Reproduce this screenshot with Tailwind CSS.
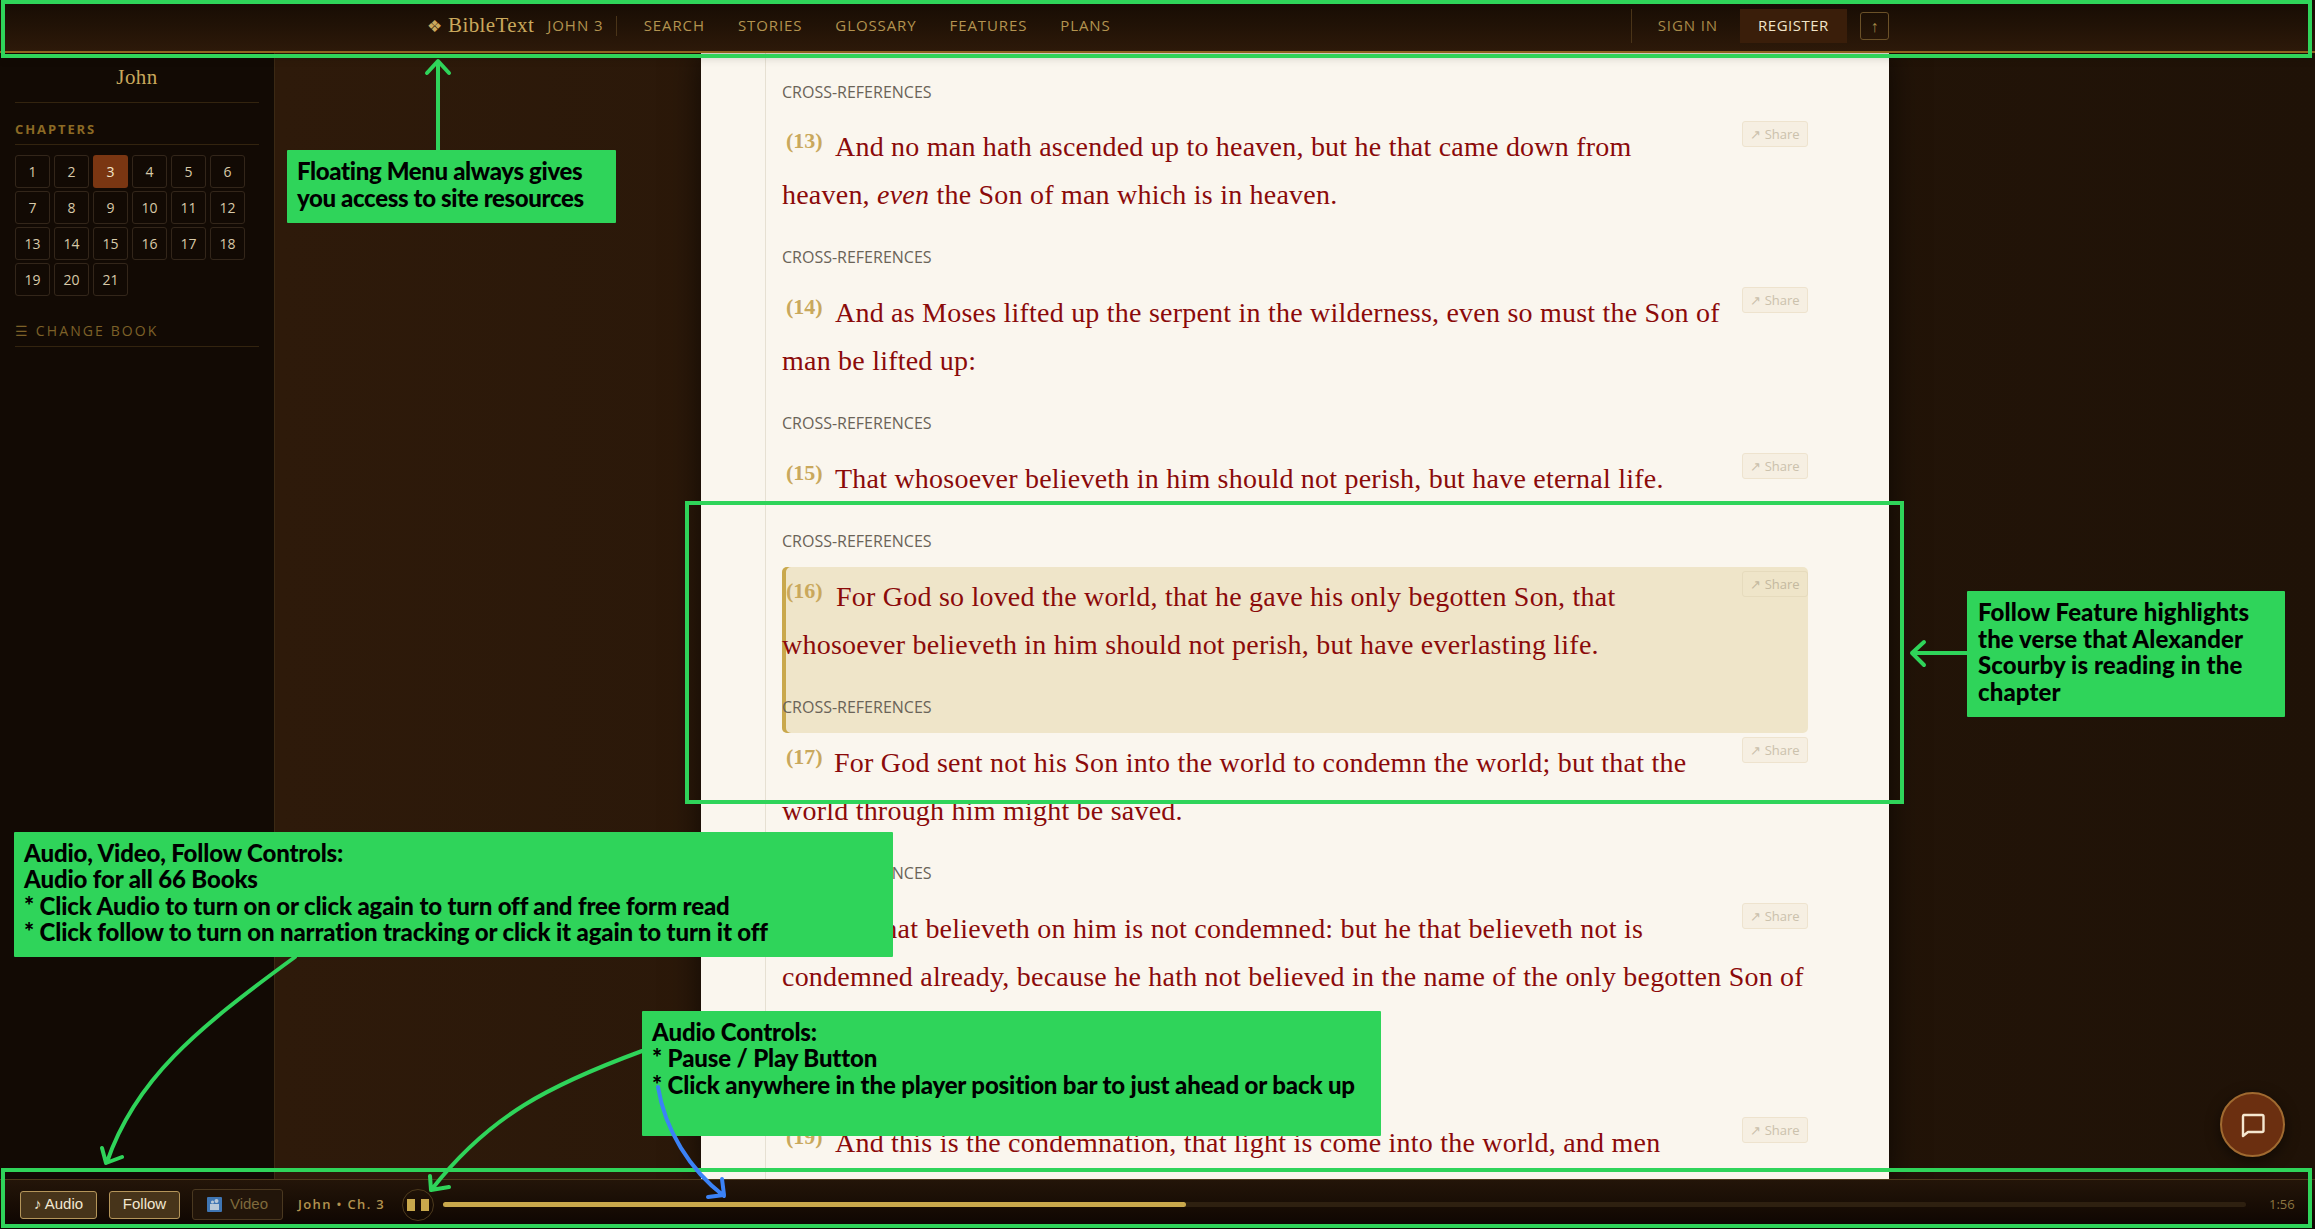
<!DOCTYPE html>
<html lang="en">
<head>
    <meta charset="UTF-8">
    <meta name="viewport" content="width=device-width, initial-scale=1.0">
    <title>BibleText - John 3</title>
    <script src="https://cdn.jsdelivr.net/npm/@tailwindcss/browser@4"></script>
</head>
<body class="bg-[#1f1207]">
<div class="relative w-[2315px] h-[1229px] overflow-hidden flex flex-col font-['Open_Sans',sans-serif]">

    <!-- floating menu -->
    <header class="relative z-20 h-[53px] shrink-0 flex items-center pl-[427px] pr-[426px] bg-linear-to-b from-[#160c04] to-[#2d1909] border-b-2 border-[#8f6420] shadow-[0_3px_10px_rgba(0,0,0,0.25)]">
        <span class="text-[#c9a85c] text-[17px] mr-[6px] leading-none">❖</span>
        <span class="font-['Liberation_Serif',serif] text-[#c9a85c] text-[21px] tracking-[0.4px]">BibleText</span>
        <span class="ml-[13px] text-[#b3934f] text-[15px] tracking-[1px]">JOHN 3</span>
        <span class="ml-[12px] w-px h-[20px] bg-[#4a3418]"></span>
        <nav class="ml-[27px] flex gap-[33px] text-[#b3934f] text-[15px] tracking-[0.9px]">
            <a>SEARCH</a>
            <a>STORIES</a>
            <a>GLOSSARY</a>
            <a>FEATURES</a>
            <a>PLANS</a>
        </nav>
        <div class="ml-auto flex items-center">
            <span class="w-px h-[34px] bg-[#4a3418]"></span>
            <a class="ml-[26px] text-[#a88a48] text-[15px] tracking-[0.9px]">SIGN IN</a>
            <a class="ml-[22px] w-[107px] h-[34px] flex items-center justify-center bg-[#3a1e0a] text-[#f0e4c8] text-[15px] tracking-[0.5px]">REGISTER</a>
            <button class="ml-[13px] w-[29px] h-[28px] flex items-center justify-center border border-[#6b5128] rounded-[3px] text-[#a88a48] text-[16px]">↑</button>
        </div>
    </header>

    <div class="flex flex-1 min-h-0">
        <!-- sidebar -->
        <aside class="w-[275px] shrink-0 px-[15px] bg-[#120a04] border-r border-[#3b2914]">
            <h2 class="h-[50px] flex items-center justify-center border-b border-[#33240f] font-['Liberation_Serif',serif] text-[#c9a85c] text-[21px] tracking-[0.4px]">John</h2>
            <h3 class="mt-[16px] pb-[5px] border-b border-[#33240f] text-[#8c6a24] text-[13px] font-bold tracking-[1.9px] leading-[20px]">CHAPTERS</h3>
            <div class="mt-[10px] grid grid-cols-[repeat(6,35px)] auto-rows-[33px] gap-x-[4px] gap-y-[3px] text-[14px] text-[#d8c9a8]">
                <a class="flex items-center justify-center border border-[#33261a] rounded-[3px]">1</a>
                <a class="flex items-center justify-center border border-[#33261a] rounded-[3px]">2</a>
                <a class="flex items-center justify-center bg-[#7a3612] text-[#f3e6c8] rounded-[3px]">3</a>
                <a class="flex items-center justify-center border border-[#33261a] rounded-[3px]">4</a>
                <a class="flex items-center justify-center border border-[#33261a] rounded-[3px]">5</a>
                <a class="flex items-center justify-center border border-[#33261a] rounded-[3px]">6</a>
                <a class="flex items-center justify-center border border-[#33261a] rounded-[3px]">7</a>
                <a class="flex items-center justify-center border border-[#33261a] rounded-[3px]">8</a>
                <a class="flex items-center justify-center border border-[#33261a] rounded-[3px]">9</a>
                <a class="flex items-center justify-center border border-[#33261a] rounded-[3px]">10</a>
                <a class="flex items-center justify-center border border-[#33261a] rounded-[3px]">11</a>
                <a class="flex items-center justify-center border border-[#33261a] rounded-[3px]">12</a>
                <a class="flex items-center justify-center border border-[#33261a] rounded-[3px]">13</a>
                <a class="flex items-center justify-center border border-[#33261a] rounded-[3px]">14</a>
                <a class="flex items-center justify-center border border-[#33261a] rounded-[3px]">15</a>
                <a class="flex items-center justify-center border border-[#33261a] rounded-[3px]">16</a>
                <a class="flex items-center justify-center border border-[#33261a] rounded-[3px]">17</a>
                <a class="flex items-center justify-center border border-[#33261a] rounded-[3px]">18</a>
                <a class="flex items-center justify-center border border-[#33261a] rounded-[3px]">19</a>
                <a class="flex items-center justify-center border border-[#33261a] rounded-[3px]">20</a>
                <a class="flex items-center justify-center border border-[#33261a] rounded-[3px]">21</a>
            </div>
            <div class="mt-[25px] pb-[5px] border-b border-[#33240f] text-[#7d6128] text-[14px] tracking-[2.1px] leading-[20px]">☰ CHANGE BOOK</div>
        </aside>

        <!-- reading column -->
        <main class="flex-1 min-w-0 pl-[426px] bg-linear-to-r from-[#2e1a0a] to-[#1f1207]">
            <article class="w-[1188px] h-full overflow-hidden pl-[64px] bg-[#faf6ee] shadow-[0_0_30px_rgba(0,0,0,0.65)]">
                <div class="h-full pl-[16px] pr-[81px] pt-[29px] border-l border-[#e6e0d2] font-['Liberation_Serif',serif] text-[#8b0a0a] text-[28px] leading-[48px] tracking-[0.22px]">
                    <div class="font-['Open_Sans',sans-serif] text-[#6a6358] text-[16px] leading-[20px] tracking-normal">CROSS-REFERENCES</div>
                    <div class="mt-[15px]"></div>

                    <section class="relative pt-[6px] pb-[64px] whitespace-nowrap">
                        <button class="absolute top-[4px] right-0 h-[26px] w-[66px] bg-[#f6efe2] border border-[#eee3ce] rounded-[3px] font-['Open_Sans',sans-serif] text-[#cbc1ac] text-[13px] leading-none tracking-normal">↗ Share</button>
                        <span class="inline-block w-[53px] pl-[4px] align-[8px] font-bold text-[#c9a85c] text-[22px] leading-[0] tracking-normal">(13)</span>And no man hath ascended up to heaven, but he that came down from<br>heaven, <em>even</em> the Son of man which is in heaven.
                        <div class="absolute bottom-[16px] left-0 font-['Open_Sans',sans-serif] text-[#6a6358] text-[16px] leading-[20px] tracking-normal">CROSS-REFERENCES</div>
                    </section>

                    <section class="relative pt-[6px] pb-[64px] whitespace-nowrap">
                        <button class="absolute top-[4px] right-0 h-[26px] w-[66px] bg-[#f6efe2] border border-[#eee3ce] rounded-[3px] font-['Open_Sans',sans-serif] text-[#cbc1ac] text-[13px] leading-none tracking-normal">↗ Share</button>
                        <span class="inline-block w-[53px] pl-[4px] align-[8px] font-bold text-[#c9a85c] text-[22px] leading-[0] tracking-normal">(14)</span>And as Moses lifted up the serpent in the wilderness, even so must the Son of<br>man be lifted up:
                        <div class="absolute bottom-[16px] left-0 font-['Open_Sans',sans-serif] text-[#6a6358] text-[16px] leading-[20px] tracking-normal">CROSS-REFERENCES</div>
                    </section>

                    <section class="relative pt-[6px] pb-[64px] whitespace-nowrap">
                        <button class="absolute top-[4px] right-0 h-[26px] w-[66px] bg-[#f6efe2] border border-[#eee3ce] rounded-[3px] font-['Open_Sans',sans-serif] text-[#cbc1ac] text-[13px] leading-none tracking-normal">↗ Share</button>
                        <span class="inline-block w-[53px] pl-[4px] align-[8px] font-bold text-[#c9a85c] text-[22px] leading-[0] tracking-normal">(15)</span>That whosoever believeth in him should not perish, but have eternal life.
                        <div class="absolute bottom-[16px] left-0 font-['Open_Sans',sans-serif] text-[#6a6358] text-[16px] leading-[20px] tracking-normal">CROSS-REFERENCES</div>
                    </section>

                    <section class="relative pt-[6px] pb-[64px] whitespace-nowrap bg-[#efe5c9] rounded-[5px] shadow-[inset_4px_0_0_#c9a84c]">
                        <button class="absolute top-[4px] right-0 h-[26px] w-[66px] bg-[#efe5c9] border border-[#e6dbbd] rounded-[3px] font-['Open_Sans',sans-serif] text-[#c4b99f] text-[13px] leading-none tracking-normal">↗ Share</button>
                        <span class="inline-block w-[54px] pl-[4px] align-[8px] font-bold text-[#c9a85c] text-[22px] leading-[0] tracking-normal">(16)</span>For God so loved the world, that he gave his only begotten Son, that<br>whosoever believeth in him should not perish, but have everlasting life.
                        <div class="absolute bottom-[16px] left-0 font-['Open_Sans',sans-serif] text-[#6a6358] text-[16px] leading-[20px] tracking-normal">CROSS-REFERENCES</div>
                    </section>

                    <section class="relative pt-[6px] pb-[64px] whitespace-nowrap">
                        <button class="absolute top-[4px] right-0 h-[26px] w-[66px] bg-[#f6efe2] border border-[#eee3ce] rounded-[3px] font-['Open_Sans',sans-serif] text-[#cbc1ac] text-[13px] leading-none tracking-normal">↗ Share</button>
                        <span class="inline-block w-[52px] pl-[4px] align-[8px] font-bold text-[#c9a85c] text-[22px] leading-[0] tracking-normal">(17)</span>For God sent not his Son into the world to condemn the world; but that the<br>world through him might be saved.
                        <div class="absolute bottom-[16px] left-0 font-['Open_Sans',sans-serif] text-[#6a6358] text-[16px] leading-[20px] tracking-normal">CROSS-REFERENCES</div>
                    </section>

                    <section class="relative pt-[6px] pb-[64px] whitespace-nowrap">
                        <button class="absolute top-[4px] right-0 h-[26px] w-[66px] bg-[#f6efe2] border border-[#eee3ce] rounded-[3px] font-['Open_Sans',sans-serif] text-[#cbc1ac] text-[13px] leading-none tracking-normal">↗ Share</button>
                        <span class="inline-block w-[53px] pl-[4px] align-[8px] font-bold text-[#c9a85c] text-[22px] leading-[0] tracking-normal">(18)</span>He that believeth on him is not condemned: but he that believeth not is<br>condemned already, because he hath not believed in the name of the only begotten Son of<br>God.
                        <div class="absolute bottom-[16px] left-0 font-['Open_Sans',sans-serif] text-[#6a6358] text-[16px] leading-[20px] tracking-normal">CROSS-REFERENCES</div>
                    </section>

                    <section class="relative pt-[6px] pb-[64px] whitespace-nowrap">
                        <button class="absolute top-[4px] right-0 h-[26px] w-[66px] bg-[#f6efe2] border border-[#eee3ce] rounded-[3px] font-['Open_Sans',sans-serif] text-[#cbc1ac] text-[13px] leading-none tracking-normal">↗ Share</button>
                        <span class="inline-block w-[53px] pl-[4px] align-[8px] font-bold text-[#c9a85c] text-[22px] leading-[0] tracking-normal">(19)</span>And this is the condemnation, that light is come into the world, and men<br>loved darkness rather than light, because their deeds were evil.
                    </section>
                </div>
            </article>
        </main>
    </div>

    <!-- audio bar -->
    <footer class="relative z-20 h-[50px] shrink-0 flex items-center pl-[20px] pr-[20px] bg-linear-to-b from-[#241509] to-[#0d0602] border-t border-[#4d3a1c]">
        <button class="w-[77px] h-[28px] bg-[#47341a] border border-[#b4955a] rounded-[3px] font-['Liberation_Sans',sans-serif] text-[#f2e8d2] text-[15px]">♪ Audio</button>
        <button class="ml-[12px] w-[71px] h-[28px] bg-[#47341a] border border-[#b4955a] rounded-[3px] font-['Liberation_Sans',sans-serif] text-[#f2e8d2] text-[15px]">Follow</button>
        <button class="ml-[12px] w-[91px] h-[31px] flex items-center justify-center gap-[8px] bg-[#22150a] border border-[#4a3820] rounded-[3px] font-['Liberation_Sans',sans-serif] text-[#7f6a3c] text-[15px]">
            <svg class="w-[15px] h-[15px]" viewBox="0 0 15 15"><rect width="15" height="15" rx="1" fill="#3f75b3"/><rect x="3" y="7" width="9" height="6" fill="#b9c9d8"/><circle cx="5.5" cy="5" r="1.6" fill="#b9c9d8"/><circle cx="9.5" cy="4" r="2" fill="#b9c9d8"/></svg>
            Video
        </button>
        <span class="ml-[15px] w-[104px] text-[#b3934f] text-[13px] font-semibold tracking-[1.35px] whitespace-nowrap">John • Ch. 3</span>
        <button class="w-[32px] h-[32px] shrink-0 flex items-center justify-center gap-[6px] border border-[#4d3a1c] rounded-full">
            <span class="w-[8px] h-[12px] bg-[#c9a84c]"></span>
            <span class="w-[8px] h-[12px] bg-[#c9a84c]"></span>
        </button>
        <div class="ml-[9px] w-[1803px] h-[5px] rounded-full bg-[#2e2010]">
            <div class="h-full rounded-full bg-[#c9a84c]" style="width: 41.2%"></div>
        </div>
        <span class="ml-[23px] text-[#8c7540] text-[13px]">1:56</span>
    </footer>

    <!-- chat -->
    <button class="absolute left-[2220px] top-[1092px] z-20 w-[65px] h-[65px] flex items-center justify-center bg-[#6b2f10] border-2 border-[#a06a30] rounded-full shadow-[0_4px_14px_rgba(0,0,0,0.5)]">
        <svg class="w-[26px] h-[26px]" viewBox="0 0 26 26" fill="none" stroke="#f5e7d0" stroke-width="2.4" stroke-linejoin="round"><path d="M4 3h18a1.5 1.5 0 0 1 1.5 1.5v14a1.5 1.5 0 0 1-1.5 1.5H8l-5 4V4.5A1.5 1.5 0 0 1 4 3z"/></svg>
    </button>

    <!-- annotations -->
    <div class="absolute z-30 left-[1px] top-0 w-[2311px] h-[58px] border-4 border-[#2fd45a]"></div>
    <div class="absolute z-30 left-[685px] top-[501px] w-[1219px] h-[303px] border-4 border-[#2fd45a]"></div>
    <div class="absolute z-30 left-[1px] top-[1168px] w-[2311px] h-[60px] border-4 border-[#2fd45a]"></div>

    <div class="absolute z-30 left-[287px] top-[150px] w-[329px] h-[73px] px-[10px] py-[7px] bg-[#2fd45a] rounded-[1px] font-['Lato',sans-serif] font-black text-black text-[24px] leading-[27px] tracking-[-0.35px]">Floating Menu always gives<br>you access to site resources</div>
    <div class="absolute z-30 left-[1967px] top-[591px] w-[318px] h-[126px] px-[11px] py-[8px] bg-[#2fd45a] rounded-[1px] font-['Lato',sans-serif] font-black text-black text-[24px] leading-[26.6px] tracking-[0.1px]">Follow Feature highlights<br>the verse that Alexander<br>Scourby is reading in the<br>chapter</div>
    <div class="absolute z-30 left-[14px] top-[832px] w-[879px] h-[125px] px-[10px] py-[8px] bg-[#2fd45a] rounded-[1px] font-['Lato',sans-serif] font-black text-black text-[24px] leading-[26.3px] tracking-[-0.15px]">Audio, Video, Follow Controls:<br>Audio for all 66 Books<br>* Click Audio to turn on or click again to turn off and free form read<br>* Click follow to turn on narration tracking or click it again to turn it off</div>
    <div class="absolute z-30 left-[642px] top-[1011px] w-[739px] h-[125px] px-[10px] py-[8px] bg-[#2fd45a] rounded-[1px] font-['Lato',sans-serif] font-black text-black text-[24px] leading-[26.3px] tracking-[-0.15px]">Audio Controls:<br>* Pause / Play Button<br>* Click anywhere in the player position bar to just ahead or back up</div>

    <svg class="absolute z-30 left-0 top-0 pointer-events-none" width="2315" height="1229" fill="none" stroke-width="4" stroke-linecap="round" stroke-linejoin="round">
        <g stroke="#2fd45a">
            <path d="M438 150V62M427 73l11-12 11 12"/>
            <path d="M1967 653h-55M1924 642l-12 11 12 12"/>
            <path d="M295 957C195 1030 135 1080 107 1162M102 1148l4 15 16-6"/>
            <path d="M642 1051C550 1085 490 1115 432 1189M430 1176l1 14 18-3"/>
        </g>
        <path stroke="#3b82f6" d="M658 1087C665 1130 690 1170 724 1196M722 1179l2 16-16 2"/>
    </svg>
</div>
</body>
</html>
